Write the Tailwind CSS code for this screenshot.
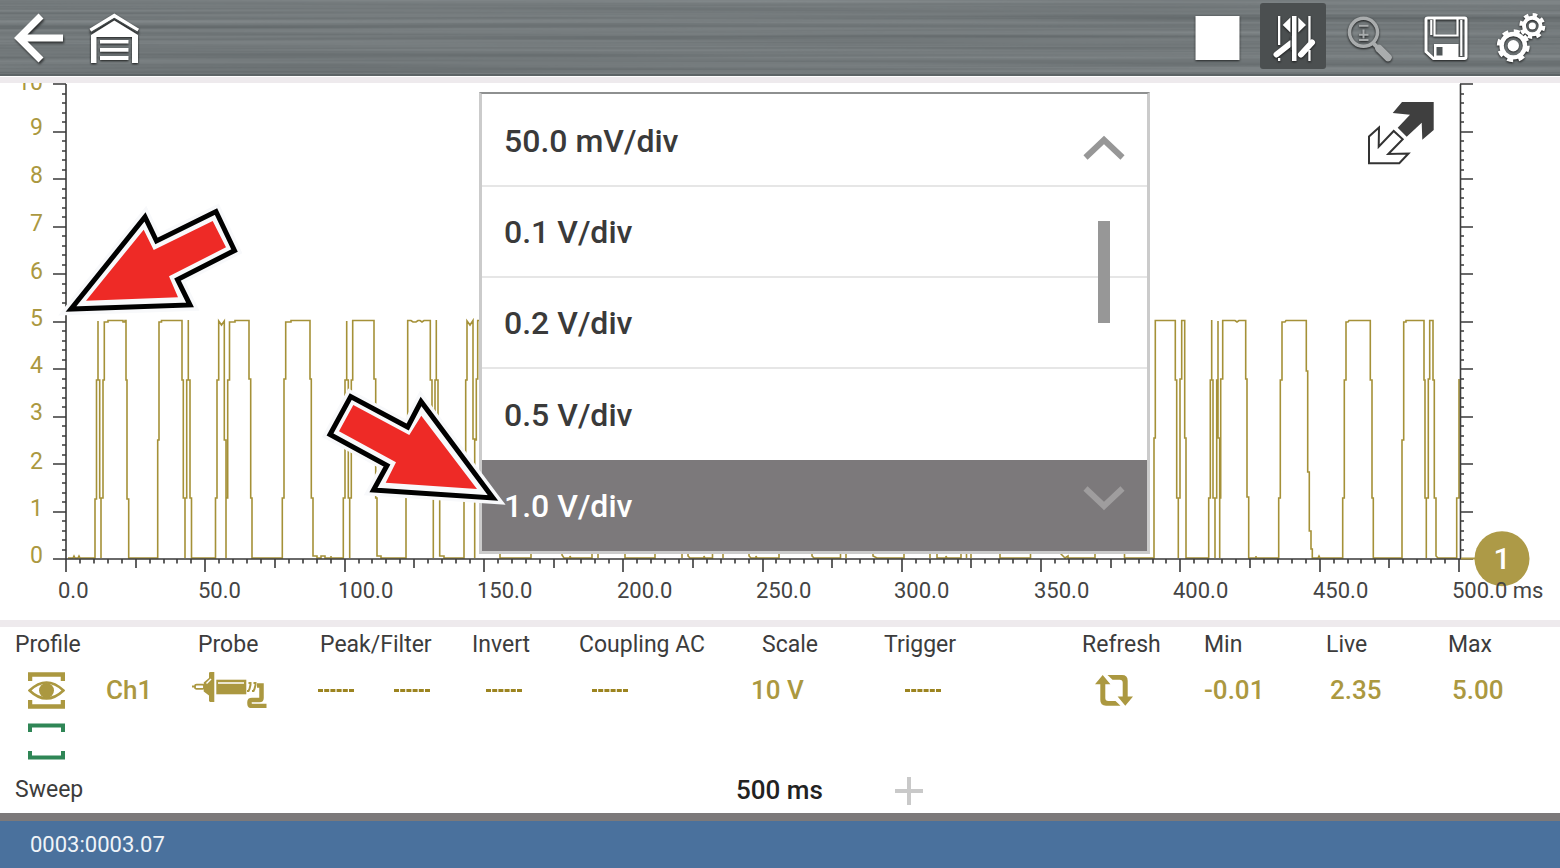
<!DOCTYPE html>
<html lang="en">
<head>
<meta charset="utf-8">
<meta name="viewport" content="width=device-width, initial-scale=1">
<title>Scope</title>
<script src="https://cdn.jsdelivr.net/npm/@tailwindcss/browser@4"></script>
</head>
<body class="bg-white font-[Roboto,'Open_Sans',sans-serif] text-[#3c3c3c]">
<div class="flex min-h-screen flex-col overflow-x-hidden">

  <header class="relative flex h-[76px] items-start justify-between bg-[#72797b] pr-[6px] pl-[5px] pt-[3px]">
    <svg class="absolute inset-0 size-full" aria-hidden="true">
      <filter id="brushed" x="0" y="0" width="100%" height="100%" color-interpolation-filters="sRGB">
        <feTurbulence type="fractalNoise" baseFrequency="0.001 0.2" numOctaves="3" seed="8"/>
        <feColorMatrix values="0.18 0 0 0 0.36  0.18 0 0 0 0.384  0.18 0 0 0 0.392  0 0 0 0 1"/>
      </filter>
      <rect width="100%" height="100%" filter="url(#brushed)"/>
      <rect y="74" width="100%" height="2" fill="#5d6466"/>
    </svg>
    <nav class="relative flex gap-[10px]">
      <button class="size-[66px]" aria-label="Back">
        <svg viewBox="0 0 66 66" class="drop-shadow-[1px_2px_1px_rgba(0,0,0,0.6)]" fill="none" stroke="#fff" stroke-width="7"><path d="M36 13 14 35l22 22M14 35h44"/></svg>
      </button>
      <button class="size-[66px]" aria-label="Home">
        <svg viewBox="0 0 66 66" class="drop-shadow-[0px_1px_1px_rgba(0,0,0,0.8)]" fill="#fff"><path d="M9.500 27.500 33.300 12.800 57 27.500" fill="none" stroke="#fff" stroke-width="4"/><path d="M10 32 33.300 17.500 57 32V60H51V34H15.500V60H10Z"/><path d="M9 30 33.300 15.500 58 30" fill="none" stroke="#444a4b" stroke-width="1.300"/><path d="M19 37h28.500v3.500H19zM19 45h28.500v3.700H19zM19 53h28.500v4H19z"/></svg>
      </button>
    </nav>
    <div class="relative flex gap-[10px]">
      <button class="size-[66px]" aria-label="Stop">
        <svg viewBox="0 0 66 66" class="drop-shadow-[0px_1px_1px_rgba(0,0,0,0.7)]"><path d="M11.500 13h44v44h-44z" fill="#fff"/></svg>
      </button>
      <button class="size-[66px] rounded-[3px] bg-[#4b4f50]" aria-label="Cursors" aria-pressed="true">
        <svg viewBox="0 0 66 66" class="drop-shadow-[0px_1px_1px_rgba(0,0,0,0.7)]" fill="#fff"><path d="M18 13h2.300v29H18zM18 55h2.300v3H18zM48.300 13h2.300v26h-2.300zM48.300 47h2.300v11h-2.300z"/><path d="M32 13h4.500v45H32zM22.700 22l7.700-7.500v15zM46 22l-7.700-7.500v15z"/><path d="m16.500 51.500 14-11M41 51.500l11-12" stroke="#fff" stroke-width="6" stroke-linecap="round"/><path d="M30.400 33h1.500v14h-1.500z" fill="#4b4f50"/></svg>
      </button>
      <button class="size-[66px]" aria-label="Zoom" disabled>
        <svg viewBox="0 0 66 66" class="drop-shadow-[0px_1px_1px_rgba(0,0,0,0.8)]" fill="none" stroke="#a9acad"><circle cx="27.500" cy="29.300" r="14" stroke-width="3.500"/><path d="M23 22.700h9.500M23 31.700h9.500M27.500 26.500v9M23 36.900h9.500" stroke-width="2"/><path d="m37 40 5 5" stroke-width="4"/><path d="m43 45.500 9 9" stroke-width="7.500" stroke-linecap="round"/></svg>
      </button>
      <button class="size-[66px]" aria-label="Save">
        <svg viewBox="0 0 66 66" class="drop-shadow-[0px_1px_1px_rgba(0,0,0,0.8)]" fill="none" stroke="#fff" stroke-width="3"><path d="M16 15h36.500q1.500 0 1.500 1.500V54q0 1.500-1.500 1.500H21.500L14 48.500V16.500Q14 15 16 15Z"/><path d="M22.500 15v17.500h23V15M19.300 17v15M49.300 17v36" stroke-width="2.200"/><path fill="#fff" stroke="none" d="M22 41h24.500v15H22z"/><path fill="#4f5557" stroke="none" d="M24.500 44h6v8.500h-6z"/></svg>
      </button>
      <button class="size-[66px]" aria-label="Settings">
        <svg viewBox="0 0 66 66" class="drop-shadow-[0px_1px_1px_rgba(0,0,0,0.8)]" fill="none" stroke="#fff"><circle cx="25.300" cy="42.700" r="11.700" stroke-width="4.400"/><circle cx="25.300" cy="42.700" r="14.500" stroke-width="4" stroke-dasharray="6 5.388"/><circle cx="25.300" cy="42.700" r="5.700" fill="#fff" stroke="none"/><circle cx="44.300" cy="23" r="8.300" stroke-width="4"/><circle cx="44.300" cy="23" r="11.200" stroke-width="3.600" stroke-dasharray="4.600 4.196"/><circle cx="44.300" cy="23" r="3.600" fill="#fff" stroke="none"/></svg>
      </button>
    </div>
  </header>
  <div class="h-[7px] border-t border-white bg-[#eeeaed]"></div>

  <main class="relative">
    <svg viewBox="0 83 1560 537" class="block w-full" role="img" aria-label="Channel 1 waveform">
      <path fill="none" stroke="#a59138" stroke-width="1.600" d="M68 558h5l1-2 1 2h3l1-2 1 2H95V499H96.500V380H98V321V380H99.700V498H101V558V498H103V380H104.300V322H108V320.500H123V322H125V320.500H126V380H127V499H128.700V558H157.700V440H159V322H161.500V320.500H182V380H183.300V498H185V558V498H186.700V380H188.300V320V380H190V498H191.500V558H215.500V498H217V380H218.700V321L221.500 325L224.300 321V440H226V558V498H227.700V380H229.500V322H235V320.500H249V379H250.700V498H252V558H282.300V498H284V379H285.700V322H291V320.500H310V379H311.300V498H313V556H317V558H321V556H325V558H331V556V558H343.300V498H345V380H346.700V321V380H348.300V498H349.700V558V498H351.300V380H352.700V320.500H374V379H375.700V498H377V556H381V558H406V440H407.700V320.500H411L413 322H416L418 320.500H420L422 322L424 320.500H430.300V380H432V498H433.300V558V498H435V380H436.300V320V380H438V498H439.700V556H444V558H464V498H465.700V380H467V321L470 325L473 320.500V439H474.700V558V440H476.300V379H477.700V320.500H497V440H500V558H531V320.500H562V555L564 558H570V556L571 558H592V320.500H598V558V320.500H625V558H655V320.500H682V558V320.500H688V556L690 558H704V556L705 558H712.500V320.500H723V558V320.500H749V556L751 558H756V556L757 558H779V320.500H812V556L814 558H840.500V320.500H846V558V320.500H873V556L877 558H904V320.500H930V558V320.500H937V558H946V556L947 558H961V320.500H966.500V558V320.500H971V558V320.500H1000V558H1030.500V320.500H1061V554L1065 558L1068 556V558H1095V320.500H1124.500V558H1154V438H1155.300V320.500H1175.300V380H1176.700V498H1178.300V558V498H1180V379H1181.700V320.500H1184.700V438H1186V558H1208.700V498H1210.300V380H1211.700V320V380H1213V498H1215V558V498H1216.700V380H1218V321V438H1219.700V558V498H1220.700V379H1222.700V320.500H1235L1237 322L1239 320.500H1245.700V379H1247V497H1248.700V558H1256V556V558H1278.700V498H1280.300V380H1282V322H1285L1286 320.500H1306.300V371H1307.700V472H1309.300V531H1311V549H1312.300V558H1318L1319 556L1320 558H1342.700V498H1344.300V380H1346V322H1348L1349 320.500H1370.300V380H1372V498H1373.300V558H1402V440H1403.700V322H1406V320.500H1424V380H1425V498H1426.300V558V498H1428.300V379H1429.700V320.500H1433V380H1434.300V498H1436V556L1438 558H1456.700V498H1459V379"/>
      <path id="ticks" fill="none" stroke="#3a3a3a" stroke-width="1.600"/>
      <path d="M1461 558.500H1478" stroke="#ab9743" stroke-width="2"/>
      <circle cx="1502" cy="558.700" r="27.500" fill="#ad9a47"/>
      <text x="1502" y="569" text-anchor="middle" fill="#fff" class="text-[30px] font-medium">1</text>
      <g class="text-[23px]" fill="#ab9840" text-anchor="end">
        <text x="43" y="90">10</text><text x="43" y="135">9</text><text x="43" y="183">8</text><text x="43" y="231">7</text><text x="43" y="279">6</text><text x="43" y="326">5</text><text x="43" y="373">4</text><text x="43" y="420">3</text><text x="43" y="469">2</text><text x="43" y="516">1</text><text x="43" y="563">0</text>
      </g>
      <g class="text-[22px]" fill="#444">
        <text x="58" y="598">0.0</text><text x="198" y="598">50.0</text><text x="338" y="598">100.0</text><text x="477" y="598">150.0</text><text x="617" y="598">200.0</text><text x="756" y="598">250.0</text><text x="894" y="598">300.0</text><text x="1034" y="598">350.0</text><text x="1173" y="598">400.0</text><text x="1313" y="598">450.0</text><text x="1452" y="598">500.0 ms</text>
      </g>
      <path fill="#3f3f3f" d="M1402 102h31.700v28l-11.400 9.700-.6-17-15 14-9-9 12.300-13-17.300-1.700Z"/>
      <path fill="#fff" stroke="#333" stroke-width="2" d="M1379 127.500 1369 136.500V163.300H1399.300L1408.500 153.500 1388.300 154 1402.700 139.300 1393.700 131 1378.700 146.700Z"/>
    </svg>

    <div class="absolute top-[9px] left-[479px] w-[671px] border-3 border-t-2 border-[#cbcbcb] border-t-[#8e9090] bg-white pt-[2px]">
      <ul class="text-[32px] font-medium text-[#3a3a3a]" aria-label="Scale">
        <li><button class="flex h-[91px] w-full items-center border-b-2 border-[#e6e6e6] px-[22px]">50.0 mV/div</button></li>
        <li><button class="flex h-[91px] w-full items-center border-b-2 border-[#e6e6e6] px-[22px]">0.1 V/div</button></li>
        <li><button class="flex h-[91px] w-full items-center border-b-2 border-[#e6e6e6] px-[22px]">0.2 V/div</button></li>
        <li><button class="flex h-[91px] w-full items-center px-[22px]">0.5 V/div</button></li>
        <li><button class="flex h-[91px] w-full items-center bg-[#7c797b] px-[22px] text-white" aria-current="true">1.0 V/div</button></li>
      </ul>
      <div class="absolute inset-y-0 right-[22px] flex w-[42px] flex-col items-center pt-[41px] pb-[40px]">
        <button aria-label="Scroll up"><svg class="block h-[26px] w-[42px]" viewBox="0 0 42 26" fill="none" stroke="#979797" stroke-width="6"><path d="M2.500 22.500 21 5l18.500 17.500"/></svg></button>
        <div class="mt-[60px] h-[102px] w-[12px] bg-[#979797]"></div>
        <button class="mt-auto" aria-label="Scroll down"><svg class="block h-[26px] w-[42px]" viewBox="0 0 42 26" fill="none" stroke="#9f9d9e" stroke-width="6"><path d="M2.500 3.500 21 21 39.500 3.500"/></svg></button>
      </div>
    </div>

    <svg viewBox="0 83 1560 537" class="pointer-events-none absolute inset-0 w-full" aria-hidden="true">
      <path fill="#f8f9fb" stroke="#f8f9fb" stroke-width="12" stroke-miterlimit="8" d="M71 309 145 217 156.500 241 216 211.500 234.500 250.500 177.500 279.500 190 305ZM493 498 421 401.500 407.700 427 350.700 396.500 330 434.500 387 465.500 373.500 490Z"/>
      <path fill="#f8f9fb" stroke="#000" stroke-width="5" d="M71 309 145 217 156.500 241 216 211.500 234.500 250.500 177.500 279.500 190 305ZM493 498 421 401.500 407.700 427 350.700 396.500 330 434.500 387 465.500 373.500 490Z"/>
      <path fill="#ee2a26" d="M86 300.700 143.700 229.700 153.700 250 212.700 221 226 247.300 169 276.300 178 297.300ZM477 489 421.300 415.700 409.300 435 353.300 405 339 431.300 396 462.300 385.700 482.700Z"/>
    </svg>
  </main>

  <div class="h-[7px] bg-[#eeeaed]"></div>

  <section class="flex grow flex-col">
    <table class="w-full table-fixed text-left text-[23px] leading-7">
      <colgroup><col class="w-[92px]"><col class="w-[92px]"><col class="w-[128px]"><col class="w-[160px]"><col class="w-[107px]"><col class="w-[161px]"><col class="w-[144px]"><col class="w-[198px]"><col class="w-[122px]"><col class="w-[122px]"><col class="w-[122px]"><col class="w-[112px]"></colgroup>
      <thead>
        <tr class="h-[34px] whitespace-nowrap [&>th]:p-0 [&>th]:pt-[2px] [&>th]:font-normal">
          <th colspan="2"><span class="pl-[15px]">Profile</span></th><th><span class="pl-[14px]">Probe</span></th><th><span class="pl-[8px]">Peak/Filter</span></th><th>Invert</th><th>Coupling AC</th><th><span class="pl-[22px]">Scale</span></th><th>Trigger</th><th>Refresh</th><th>Min</th><th>Live</th><th>Max</th>
        </tr>
      </thead>
      <tbody class="text-[26px] font-medium whitespace-nowrap text-[#ab9840]">
        <tr class="h-[58px]">
          <td class="pl-[28px]"><button class="block" aria-label="Show channel 1"><svg class="block h-[37px] w-[37px]" viewBox="0 0 37 37" fill="none" stroke="#ab9840"><path d="M2 9V2.500H35V9M2 28v6.500H35V28" stroke-width="4.500"/><path d="M1.500 18.500Q18.500 2.500 35.500 18.500 18.500 34.500 1.500 18.500Z" stroke-width="2.500"/><circle cx="18.500" cy="18.500" r="7.500" fill="#ab9840" stroke="none"/></svg></button></td>
          <td class="pl-[14px]">Ch1</td>
          <td class="pl-[8px]"><button class="block" aria-label="Probe type"><svg class="block h-[36px] w-[75px]" viewBox="0 0 75 36" fill="#ab9840"><path d="M0 13.500h3v2H0z"/><rect x="3" y="12.700" width="9" height="4.200" rx="1.500" fill="none" stroke="#ab9840" stroke-width="1.800"/><path d="M11.700 10.500 17 6V0.500L18.500 0H22.300V30H18L17 29V23.500L11.700 19.500Z"/><path d="M14.500 11.500 19 7" stroke="#fff" stroke-width="1.500"/><path d="M24.300 7.700h30v14.600h-30z"/><path d="M26 11h26" stroke="#fff" stroke-width="1.500"/><path d="M56.500 11h2v2l-1 4-1 2h-1.500M61.500 11h2v2l-1 4-1 2h-1.500" fill="none" stroke="#ab9840" stroke-width="2"/><path d="M65 13.500h4.500V26q0 2-2 2H60q-2.500 0-2.500 2v1.500q0 2.500 2.500 2.500H74.500" fill="none" stroke="#ab9840" stroke-width="4.500"/></svg></button></td>
          <td class="pl-[6px]"><div class="flex gap-[40px]"><svg class="h-[3px] w-[36px]" viewBox="0 0 36 3"><path d="M0 1.500H36" stroke="#9c8420" stroke-width="3" stroke-dasharray="5 1.200"/></svg><svg class="h-[3px] w-[36px]" viewBox="0 0 36 3"><path d="M0 1.500H36" stroke="#9c8420" stroke-width="3" stroke-dasharray="5 1.200"/></svg></div></td>
          <td class="pl-[14px]"><svg class="block h-[3px] w-[36px]" viewBox="0 0 36 3"><path d="M0 1.500H36" stroke="#9c8420" stroke-width="3" stroke-dasharray="5 1.200"/></svg></td>
          <td class="pl-[13px]"><svg class="block h-[3px] w-[36px]" viewBox="0 0 36 3"><path d="M0 1.500H36" stroke="#9c8420" stroke-width="3" stroke-dasharray="5 1.200"/></svg></td>
          <td class="pl-[11px]">10 V</td>
          <td class="pl-[21px]"><svg class="block h-[3px] w-[36px]" viewBox="0 0 36 3"><path d="M0 1.500H36" stroke="#9c8420" stroke-width="3" stroke-dasharray="5 1.200"/></svg></td>
          <td class="pl-[13px]"><button class="block" aria-label="Refresh"><svg class="block h-[31px] w-[38px]" viewBox="0 0 38 31" fill="#ab9840"><path id="half" d="M7.700 0 15.400 9.300H10.300V23Q10.300 26 13.300 26H20.500L25.500 30.700H11Q5.300 30.700 5.300 25V9.300H0Z"/><use href="#half" transform="rotate(180 19 15.350)"/></svg></button></td>
          <td>-0.01</td>
          <td class="pl-[4px]">2.35</td>
          <td class="pl-[4px]">5.00</td>
        </tr>
        <tr class="h-[45px]">
          <td class="pl-[28px]" colspan="12"><button class="block" aria-label="Show channel 2"><svg class="block h-[37px] w-[37px]" viewBox="0 0 37 37" fill="none" stroke="#2f8656" stroke-width="4"><path d="M2 9V2.500H35V9M2 28v6.500H35V28"/></svg></button></td>
        </tr>
      </tbody>
    </table>
    <div class="grid h-[49px] grid-cols-[1fr_1fr] items-center pt-[4px] text-[23px]">
      <span class="pl-[15px]">Sweep</span>
      <div class="-ml-[44px] flex items-center gap-[72px]">
        <span class="text-[26px] font-medium text-[#222]">500 ms</span>
        <button aria-label="Increase sweep"><svg class="block size-[28px]" viewBox="0 0 28 28"><path d="M0 14h28M14 0v28" stroke="#c9c9c9" stroke-width="4"/></svg></button>
      </div>
    </div>
  </section>

  <footer class="flex h-[55px] items-center border-t-8 border-[#7c797a] bg-[#4a719d] pl-[30px] text-[22px] text-[#f0f4f8]">0003:0003.07</footer>
</div>
<script>
  // Axis lines with their tick marks: major, half and minor divisions
  let d = 'M66 84V572M53 559H1461M1460.500 84V559';
  for (let i = 0; i <= 50; i++) {
    const y = Math.round(84 + i * 9.500), major = i % 5 === 0;
    d += `M${major ? 53 : 62} ${y}H66M1460 ${y}H${major ? 1473 : 1464}`;
  }
  for (let i = 0; i <= 100; i++) {
    const x = Math.round(66 + i * 13.930);
    d += `M${x} 559V${i % 10 === 0 ? 572 : i % 5 === 0 ? 568 : 563.500}`;
  }
  document.getElementById('ticks').setAttribute('d', d);
</script>
</body>
</html>
